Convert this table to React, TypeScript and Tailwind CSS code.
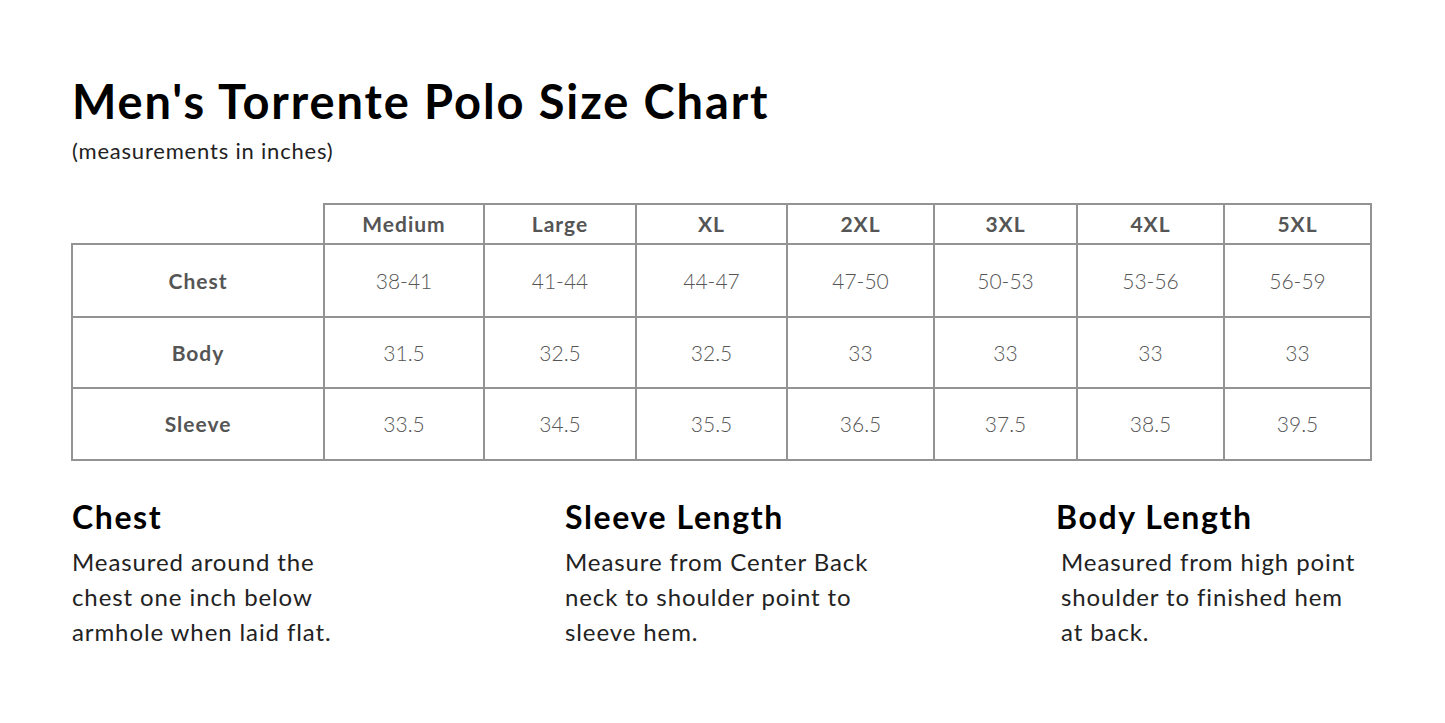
import React from "react";

const sizes = ["Medium", "Large", "XL", "2XL", "3XL", "4XL", "5XL"];
const widths = ["w-[252px]", "w-[160px]", "w-[152px]", "w-[151px]", "w-[147px]", "w-[143px]", "w-[147px]", "w-[147px]"];

const rows = [
  { label: "Chest", values: ["38-41", "41-44", "44-47", "47-50", "50-53", "53-56", "56-59"], h: "h-[73px]" },
  { label: "Body", values: ["31.5", "32.5", "32.5", "33", "33", "33", "33"], h: "h-[71px]" },
  { label: "Sleeve", values: ["33.5", "34.5", "35.5", "36.5", "37.5", "38.5", "39.5"], h: "h-[72px]" },
];

const notes = [
  { title: "Chest", lines: ["Measured around the", "chest one inch below", "armhole when laid flat."], w: "w-[493px]", pad: "" },
  { title: "Sleeve Length", lines: ["Measure from Center Back", "neck to shoulder point to", "sleeve hem."], w: "w-[491px]", pad: "" },
  { title: "Body Length", lines: ["Measured from high point", "shoulder to finished hem", "at back."], w: "w-[330px]", pad: "pl-[5px]" },
];

export default function App() {
  return (
    <div
      className="w-[1445px] h-[723px] bg-white text-black pl-[72px] pt-[72px]"
      style={{ fontFamily: "Lato, 'Noto Sans', sans-serif" }}
    >
      {/* Heading */}
      <h1 className="text-[47px] leading-[58px] font-bold tracking-[1.9px]">Men's Torrente Polo Size Chart</h1>
      <p className="text-[22px] leading-[26px] text-[#222] tracking-[0.8px] mt-[8px]">(measurements in inches)</p>

      {/* Table */}
      <table className="mt-[39px] ml-[-1px] border-collapse table-fixed">
        <thead>
          <tr className="h-[40px]">
            <th className={`${widths[0]} p-0`} />
            {sizes.map((s, i) => (
              <th
                key={s}
                className={`${widths[i + 1]} p-0 border-2 border-[#939393] text-[21px] font-bold tracking-[1px] text-[#555] text-center`}
              >
                {s}
              </th>
            ))}
          </tr>
        </thead>
        <tbody>
          {rows.map((r) => (
            <tr key={r.label} className={r.h}>
              <td className="p-0 border-2 border-[#939393] text-[21px] font-bold tracking-[1px] text-[#555] text-center">
                {r.label}
              </td>
              {r.values.map((v, i) => (
                <td key={i} className="p-0 border-2 border-[#939393] text-[21px] font-light text-[#555] text-center">
                  {v}
                </td>
              ))}
            </tr>
          ))}
        </tbody>
      </table>

      {/* Measurement notes */}
      <div className="flex mt-[36px]">
        {notes.map((n) => (
          <div key={n.title} className={n.w}>
            <h2 className="text-[32px] leading-[40px] font-bold tracking-[1.6px]">{n.title}</h2>
            <div className={`${n.pad} mt-[7px] text-[24px] leading-[35px] tracking-[0.9px] text-[#222]`}>
              {n.lines.map((l) => (
                <div key={l}>{l}</div>
              ))}
            </div>
          </div>
        ))}
      </div>
    </div>
  );
}
